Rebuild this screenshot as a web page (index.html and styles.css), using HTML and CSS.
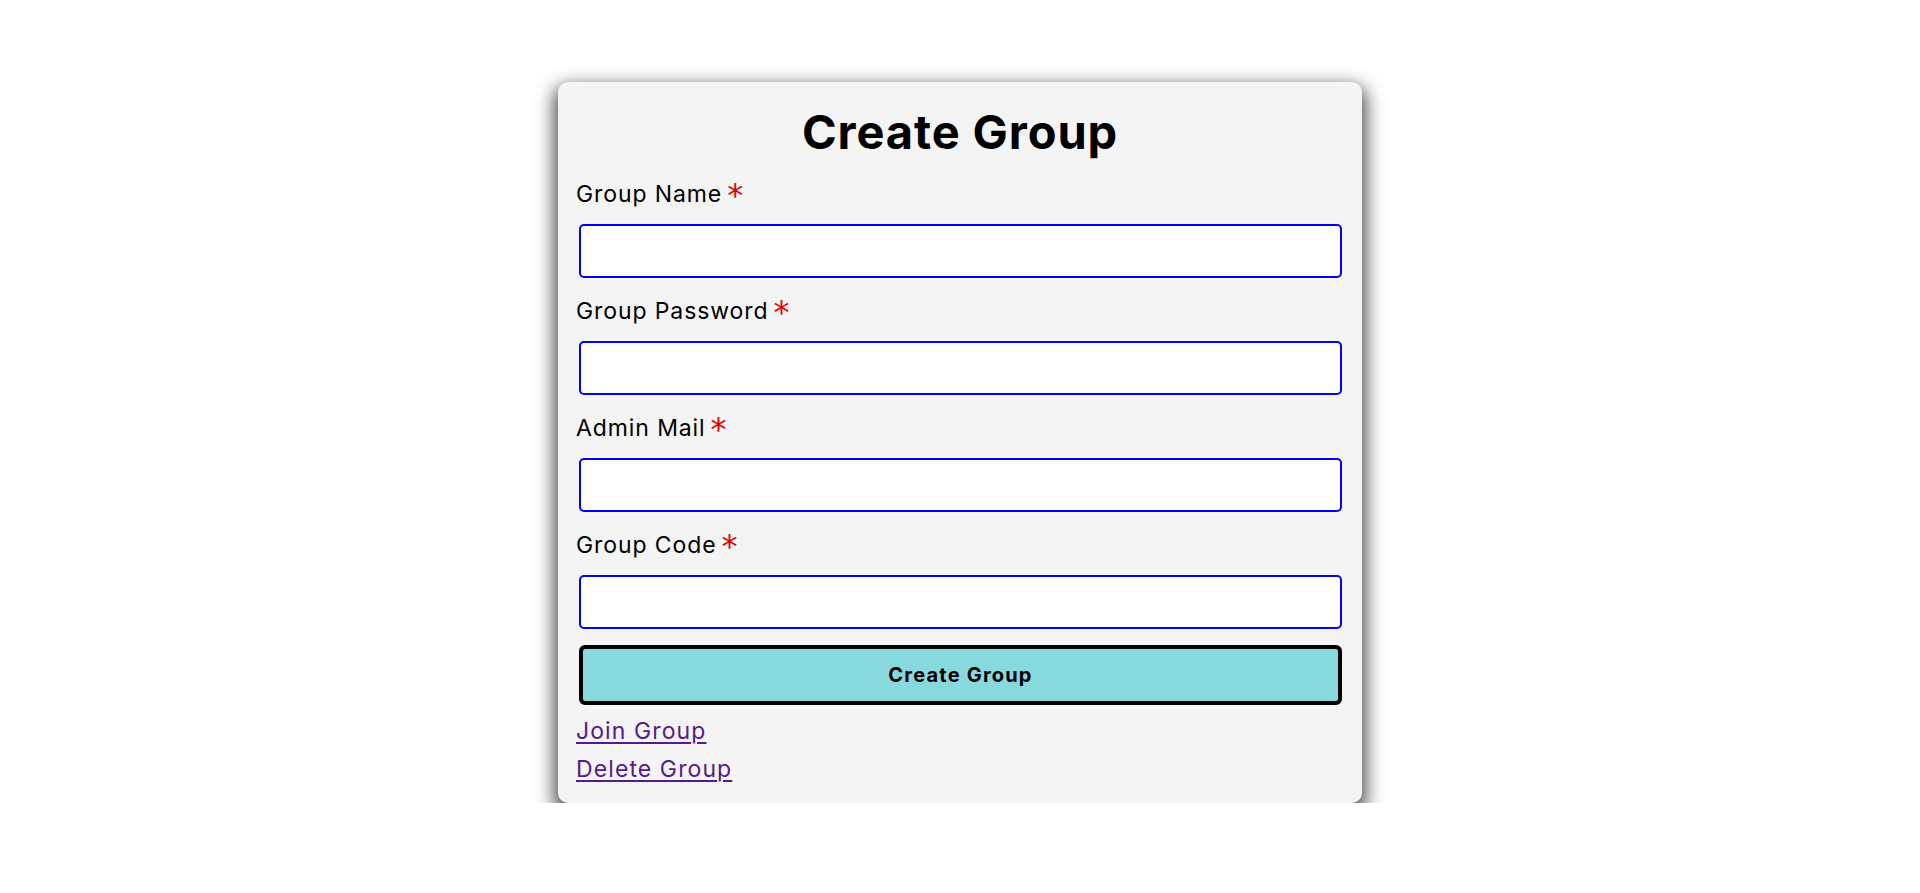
FILE: index.html
```html
<!DOCTYPE html>
<html lang="en">
<head>
<meta charset="utf-8">
<title>Create Group</title>
<link rel="stylesheet" href="styles.css">
</head>
<body>
<main class="page">
  <form class="card">
    <h1 class="title">Create Group</h1>
    <label class="label first" for="gname">Group Name<span class="req">*</span></label>
    <input class="field" id="gname" type="text">
    <label class="label" for="gpass">Group Password<span class="req">*</span></label>
    <input class="field" id="gpass" type="password">
    <label class="label" for="amail">Admin Mail<span class="req">*</span></label>
    <input class="field" id="amail" type="email">
    <label class="label" for="gcode">Group Code<span class="req">*</span></label>
    <input class="field" id="gcode" type="text">
    <button class="submit" type="button">Create Group</button>
    <div class="links">
      <a class="link" href="#join">Join Group</a>
      <a class="link" href="#delete">Delete Group</a>
    </div>
  </form>
</main>
</body>
</html>
```
FILE: styles.css
```css
html, body {
  margin: 0;
  padding: 0;
  background: #ffffff;
}

body {
  font-family: Inter, "Noto Sans", sans-serif;
  color: #000;
}

.page {
  display: flex;
  justify-content: center;
  padding-top: 82px;
}

.card {
  box-sizing: border-box;
  width: 804px;
  display: flex;
  flex-direction: column;
  background: #f4f4f4;
  border-radius: 10px;
  padding: 21px 18px 20px;
  box-shadow: 0 8px 18px 4px rgba(0, 0, 0, 0.7);
}

.title {
  margin: 0 0 19px;
  font-size: 47px;
  line-height: 58px;
  font-weight: 700;
  text-align: center;
  letter-spacing: 0.9px;
}

.label {
  display: block;
  margin-top: 19px;
  font-size: 23px;
  line-height: 28px;
  font-weight: 400;
  letter-spacing: 0.9px;
}

.label.first {
  margin-top: 0;
}

.req {
  display: inline-block;
  margin-left: 5px;
  color: #e00000;
  font-family: "DejaVu Sans", sans-serif;
  font-size: 32px;
  line-height: 0;
  vertical-align: -4px;
}

.field {
  box-sizing: border-box;
  display: block;
  height: 54px;
  margin: 16px 2px 0 3px;
  border: 2px solid #0000ff;
  border-radius: 5px;
  background: #fff;
  outline: none;
  font: inherit;
}

.submit {
  box-sizing: border-box;
  height: 60px;
  margin: 16px 2px 0 3px;
  border: 4px solid #000;
  border-radius: 6px;
  background: #88d9de;
  color: #000;
  font-family: Inter, "Noto Sans", sans-serif;
  font-size: 20px;
  font-weight: 700;
  letter-spacing: 1.2px;
  cursor: pointer;
}

.links {
  display: flex;
  flex-direction: column;
  align-items: flex-start;
  gap: 10px;
  margin-top: 12px;
}

.link {
  font-size: 23px;
  line-height: 28px;
  letter-spacing: 1.1px;
  color: #551a8b;
  text-decoration: underline;
  text-decoration-thickness: 2px;
  text-underline-offset: 3px;
}
```
